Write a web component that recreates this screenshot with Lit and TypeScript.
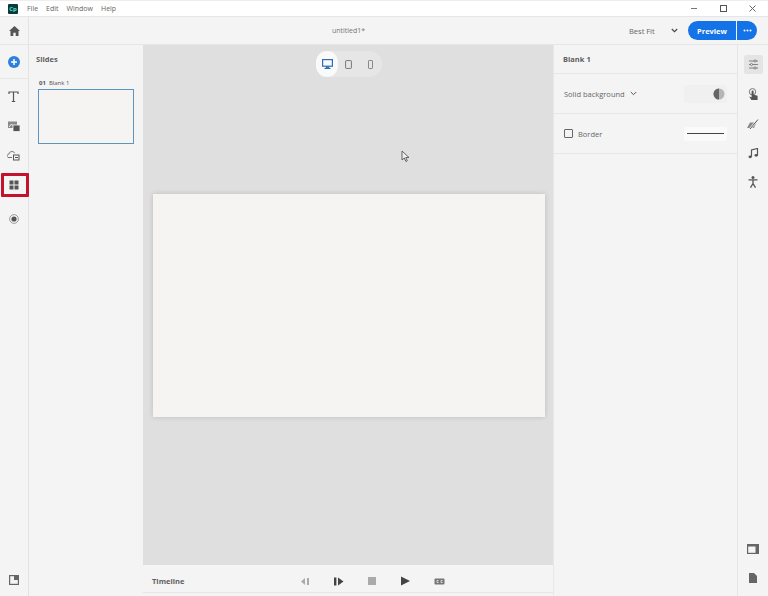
import { LitElement, html, css, svg } from "lit";
import { customElement } from "lit/decorators.js";

const I = (w: number, h: number, body: unknown, cls = "") =>
  html`<svg class=${cls} width=${w} height=${h} viewBox="0 0 ${w} ${h}">${body}</svg>`;

@customElement("app-root")
export class AppRoot extends LitElement {
  static styles = css`
    :host { display: flex; flex-direction: column; width: 768px; height: 596px; overflow: hidden; background: #f4f4f4; font-family: "Open Sans", "Liberation Sans", sans-serif; color: #555; position: relative; }
    svg { display: block; flex: none; }
    .titlebar { height: 15px; flex: none; background: #fff; display: flex; align-items: center; padding: 0 1px 0 8px; font-size: 7px; color: #666; border-bottom: 1px solid #e6e6e6; border-top: 1px solid #eee; box-sizing: content-box; }
    .logo { width: 10px; height: 10px; background: #0b3a3c; color: #4fe0c8; font-size: 6px; font-weight: 700; line-height: 10px; text-align: center; border-radius: 1px; margin-right: 9px; }
    .menu { display: flex; gap: 8px; }
    .winbtns { margin-left: auto; display: flex; gap: 0; align-items: center; }
    .winbtns span { width: 29px; display: flex; justify-content: center; }
    .body { flex: 1; display: flex; min-height: 0; }
    .rail { width: 28px; flex: none; border-right: 1px solid #e3e3e3; display: flex; flex-direction: column; align-items: center; }
    .rail-home { height: 27px; flex: none; width: 100%; display: flex; align-items: center; justify-content: center; border-bottom: 1px solid #e6e6e6; }
    .rail-add { height: 34px; flex: none; width: 100%; box-sizing: border-box; padding-right: 1px; display: flex; align-items: center; justify-content: center; border-bottom: 1px solid #e6e6e6; }
    .rail-tools { display: flex; flex-direction: column; align-items: flex-start; width: 100%; padding-top: 3px; }
    .tool { height: 29.5px; width: 27px; display: flex; align-items: center; justify-content: center; }
    .tool.red { box-sizing: border-box; align-self: flex-start; height: 24px; width: 28px; margin: 2px 0 0 1px; padding: 0 2px 0 0; border: 3px solid #c4112d; border-radius: 1px; }
    .tool.rec { margin-top: 7px; height: 30px; }
    .rail-end { margin-top: auto; padding-bottom: 11px; }
    .work { flex: 1; display: flex; flex-direction: column; min-width: 0; }
    .topbar { height: 27px; flex: none; display: flex; align-items: center; border-bottom: 1px solid #e6e6e6; }
    .docname { font-size: 7px; color: #777; margin-left: 303px; }
    .top-right { margin-left: auto; display: flex; align-items: center; padding-right: 11px; }
    .fit { font-size: 7.5px; color: #666; width: 42px; }
    .chev-wrap { width: 17px; }
    .btn-preview { width: 48px; height: 19px; margin-left: 0; background: #1473e6; color: #fff; font-size: 7.5px; font-weight: 700; display: flex; align-items: center; justify-content: center; border-radius: 10px 0 0 10px; }
    .btn-more { width: 20px; height: 19px; margin-left: 1px; background: #1473e6; color: #fff; display: flex; align-items: center; justify-content: center; border-radius: 0 10px 10px 0; }
    .panes { flex: 1; display: flex; min-height: 0; }
    .slides { width: 114px; flex: none; box-sizing: border-box; padding: 9px 9px 0 7px; }
    .h { font-size: 7.5px; font-weight: 700; color: #5f5f5f; line-height: 11px; }
    .sl-label { margin-top: 14px; margin-left: 3px; font-size: 6px; color: #555; display: flex; gap: 3px; line-height: 9px; }
    .sl-label b { font-weight: 700; }
    .thumb { margin-top: 1px; margin-left: 2px; width: 96px; height: 55px; box-sizing: border-box; border: 1.5px solid #5f94bd; background: #f5f4f2; }
    .center { width: 410px; flex: none; display: flex; flex-direction: column; }
    .canvas { flex: 1; background: #dfdfdf; display: flex; flex-direction: column; align-items: center; padding: 6px 0 0; position: relative; min-height: 0; }
    .devices { display: flex; align-items: center; height: 26px; width: 66px; margin-left: 2px; border-radius: 13px; background: #e6e6e6; }
    .dev { width: 22px; height: 26px; display: flex; align-items: center; justify-content: center; }
    .dev.on { background: #fafafa; border-radius: 13px; margin-right: -1px; }
    .slide { margin-top: 117px; width: 392px; height: 223px; background: #f5f4f2; box-shadow: 0 0 5px rgba(0,0,0,.16); margin-left: 2px; }
    .cursor { position: absolute; left: 258px; top: 105px; }
    .timeline { height: 28px; flex: none; display: flex; align-items: center; background: #f4f4f4; padding: 5px 0 0 9px; margin-bottom: 3px; border-bottom: 1px solid #e6e6e6; box-sizing: border-box; position: relative; }
    .tl-ctrl { margin-left: 104px; display: flex; align-items: center; gap: 0; }
    .tl-ctrl span { width: 33.5px; display: flex; justify-content: center; }
    .props { width: 185px; flex: none; border-right: 1px solid #e6e6e6; border-left: 1px solid #e8e8e8; box-sizing: border-box; }
    .prop-h { height: 29px; box-sizing: border-box; border-bottom: 1.5px solid #e8e8e8; padding: 9px 0 0 9px; }
    .row { height: 40px; box-sizing: border-box; border-bottom: 1.5px solid #e8e8e8; display: flex; align-items: center; padding: 0 0 0 10px; font-size: 7.5px; color: #666; }
    .row .chev { margin-left: 5px; }
    .swatch { margin-left: auto; margin-right: 10px; width: 43px; height: 18px; background: #f0f0f0; display: flex; align-items: center; justify-content: flex-end; padding-right: 2px; box-sizing: border-box; border-radius: 2px; }
    .check { width: 7px; height: 7px; border: 1px solid #666; border-radius: 1px; margin-right: 5px; }
    .stroke { margin-left: auto; margin-right: 10px; width: 43px; height: 14px; background: #fafafa; display: flex; align-items: center; justify-content: center; border-radius: 2px; }
    .stroke i { display: block; width: 37px; height: 1.5px; background: #444; }
    .rrail { flex: 1; display: flex; flex-direction: column; align-items: center; padding-top: 4.5px; }
    .ricon { height: 29px; width: 100%; display: flex; align-items: center; justify-content: center; }
    .ricon.tall { height: 31px; }
    .ricon.on i { display: flex; align-items: center; justify-content: center; width: 19px; height: 19px; background: #e4e4e4; border-radius: 2px; }
    .rend { margin-top: auto; padding-bottom: 4px; }
  `;

  render() {
    const d = "#555";
    return html`
      <div class="titlebar">
        <div class="logo">Cp</div>
        <div class="menu"><span>File</span><span>Edit</span><span>Window</span><span>Help</span></div>
        <div class="winbtns">
          <span>${I(9, 9, svg`<path d="M1 4.5h6" stroke="#777"/>`)}</span>
          <span>${I(9, 9, svg`<rect x="1.5" y="1.5" width="6" height="6" fill="none" stroke="#555"/>`)}</span>
          <span>${I(9, 9, svg`<path d="M1.5 1.5l6 6M7.5 1.5l-6 6" stroke="#666"/>`)}</span>
        </div>
      </div>
      <div class="body">
        <div class="rail">
          <div class="rail-home">${I(11, 10, svg`<path d="M5.5 0L11 5H9.5V10H6.7V6.8H4.3V10H1.5V5H0Z" fill=${d}/>`)}</div>
          <div class="rail-add">${I(12, 12, svg`<circle cx="6" cy="6" r="6" fill="#2f80dc"/><path d="M6 3v6M3 6h6" stroke="#fff" stroke-width="1.5"/>`)}</div>
          <div class="rail-tools">
            <div class="tool">${I(11, 11, svg`<path d="M1 3V1h9v2M5.5 1v9.5M3.8 10.5h3.4" fill="none" stroke=${d} stroke-width="1.2"/>`)}</div>
            <div class="tool">${I(12, 11, svg`<rect x="0" y="0.5" width="9" height="6.5" fill="#8a8a8a"/><path d="M1 6l2.5-3 2 2" stroke="#eee" fill="none"/><rect x="5" y="4" width="7" height="6.5" fill="#555" stroke="#f4f4f4" stroke-width=".8"/>`)}</div>
            <div class="tool">${I(13, 11, svg`<path d="M1 7.5a2 2 0 0 1 1-3.6 3 3 0 0 1 5.7-.7" fill="none" stroke="#777"/><path d="M1 7.5H5" stroke="#777"/><rect x="6.5" y="5" width="5.5" height="5" fill="none" stroke="#555"/><path d="M8 7.5h3" stroke="#555"/>`)}</div>
            <div class="tool red">${I(10, 10, svg`<rect x="0.5" y="0.5" width="4" height="4" fill=${d}/><rect x="5.5" y="0.5" width="4" height="4" fill=${d}/><rect x="0.5" y="5.5" width="4" height="4" fill=${d}/><rect x="5.5" y="5.5" width="4" height="4" fill=${d}/>`)}</div>
            <div class="tool rec">${I(10, 10, svg`<circle cx="5" cy="5" r="4.4" fill="none" stroke="#888" stroke-width=".8"/><circle cx="5" cy="5" r="2.6" fill="#555"/>`)}</div>
          </div>
          <div class="rail-end">${I(10, 10, svg`<rect x="0.6" y="0.6" width="8.8" height="8.8" fill="none" stroke="#666" stroke-width="1.2"/><path d="M5 1h4.5v4H5z" fill="#666"/>`)}</div>
        </div>
        <div class="work">
          <div class="topbar">
            <div class="docname">untitled1*</div>
            <div class="top-right">
              <span class="fit">Best Fit</span>
              <span class="chev-wrap">${I(7, 5, svg`<path d="M.8 1l2.7 2.7L6.2 1" fill="none" stroke="#444" stroke-width="1.1"/>`)}</span>
              <div class="btn-preview">Preview</div>
              <div class="btn-more">${I(9, 3, svg`<circle cx="1.5" cy="1.5" r="1" fill="#fff"/><circle cx="4.5" cy="1.5" r="1" fill="#fff"/><circle cx="7.5" cy="1.5" r="1" fill="#fff"/>`)}</div>
            </div>
          </div>
          <div class="panes">
            <div class="slides">
              <div class="h">Slides</div>
              <div class="sl-label"><b>01</b><span>Blank 1</span></div>
              <div class="thumb"></div>
            </div>
            <div class="center">
              <div class="canvas">
                <div class="devices">
                  <div class="dev on">${I(11, 10, svg`<rect x=".6" y=".6" width="9.8" height="6.6" fill="none" stroke="#2c6fb4" stroke-width="1.2"/><path d="M4 7.5h3l.5 1.7h-4z" fill="#2c6fb4"/><path d="M2.5 9.5h6" stroke="#2c6fb4"/>`)}</div>
                  <div class="dev">${I(7, 9, svg`<rect x=".6" y=".6" width="5.8" height="7.8" rx=".6" fill="none" stroke="#777"/>`)}</div>
                  <div class="dev">${I(5, 9, svg`<rect x=".5" y=".5" width="4" height="8" rx=".6" fill="none" stroke="#888"/>`)}</div>
                </div>
                <div class="slide"></div>
                <div class="cursor">${I(9, 13, svg`<path d="M1 1v9l2.3-2 1.6 3.5 1.4-.7L4.8 7.5H8z" fill="#eee" stroke="#555" stroke-width=".9"/>`)}</div>
              </div>
              <div class="timeline">
                <div class="h">Timeline</div>
                <div class="tl-ctrl">
                  <span>${I(10, 9, svg`<path d="M5 1v7L1 4.5z" fill="#aaa"/><rect x="7" y="1" width="2" height="7" fill="#aaa"/>`)}</span>
                  <span>${I(10, 9, svg`<rect x="0" y="0.5" width="2.4" height="8" fill="#444"/><path d="M4 .5v8l5.5-4z" fill="#444"/>`)}</span>
                  <span>${I(8, 8, svg`<rect width="8" height="8" fill="#aaa"/>`)}</span>
                  <span>${I(9, 10, svg`<path d="M0 .5v9L9 5z" fill="#444"/>`)}</span>
                  <span>${I(11, 7, svg`<rect x=".5" y=".5" width="10" height="6" rx="1" fill="#777"/><path d="M4.5 2.5H3v2h1.5M8.5 2.5H7v2h1.5" fill="none" stroke="#eee" stroke-width=".8"/>`)}</span>
                </div>
              </div>
            </div>
            <div class="props">
              <div class="prop-h h">Blank 1</div>
              <div class="row">Solid background
                <span class="chev">${I(7, 5, svg`<path d="M.8 1l2.7 2.7L6.2 1" fill="none" stroke="#555" stroke-width="1"/>`)}</span>
                <div class="swatch">${I(12, 12, svg`<circle cx="6" cy="6" r="5.5" fill="#b5b5b5"/><path d="M6 .5a5.5 5.5 0 0 0 0 11z" fill="#666"/>`)}</div>
              </div>
              <div class="row"><div class="check"></div>Border<div class="stroke"><i></i></div></div>
            </div>
            <div class="rrail">
              <div class="ricon on"><i>${I(11, 11, svg`<path d="M1 2h9M1 5.5h9M1 9h9" stroke="#777" stroke-width=".9"/><circle cx="7" cy="2" r="1.1" fill="#e4e4e4" stroke="#666" stroke-width=".7"/><circle cx="3.5" cy="5.5" r="1.1" fill="#e4e4e4" stroke="#666" stroke-width=".7"/><circle cx="7" cy="9" r="1.1" fill="#e4e4e4" stroke="#666" stroke-width=".7"/>`)}</i></div>
              <div class="ricon tall">${I(11, 13, svg`<circle cx="4.5" cy="3.8" r="3.2" fill="none" stroke="#777"/><path d="M3.6 3.5a1 1 0 0 1 2 0v3.2l4 1.1v4.2H3.4L1.2 8.6l2.4.6z" fill="#555"/>`)}</div>
              <div class="ricon">${I(12, 10, svg`<path d="M0 9L3 3.5h6.5L7 9z" fill="#888"/><path d="M3 10L11 .5" stroke="#f4f4f4" stroke-width="2.2"/><path d="M3 10L11 .5" stroke="#555" stroke-width="1"/>`)}</div>
              <div class="ricon">${I(11, 11, svg`<path d="M3.5 8.5V2l6-1.5v6.5" fill="none" stroke="#555" stroke-width="1.2"/><ellipse cx="2.2" cy="8.8" rx="1.7" ry="1.4" fill="#555"/><ellipse cx="8.2" cy="7.3" rx="1.7" ry="1.4" fill="#555"/>`)}</div>
              <div class="ricon">${I(10, 12, svg`<circle cx="5" cy="1.6" r="1.5" fill="#555"/><path d="M.5 3.8h9M5 3.8v4M5 7.5l-2.5 4.2M5 7.5l2.5 4.2" fill="none" stroke="#555" stroke-width="1.3"/>`)}</div>
              <div class="rend">
                <div class="ricon">${I(12, 10, svg`<rect x=".6" y=".6" width="10.8" height="8.8" fill="none" stroke="#666" stroke-width="1.2"/><path d="M1 1h10v1.5H1zM8.5 1H11v8H8.5z" fill="#666"/>`)}</div>
                <div class="ricon">${I(8, 10, svg`<path d="M0 0h5l3 3v7H0z" fill="#666"/>`)}</div>
              </div>
            </div>
          </div>
        </div>
      </div>
    `;
  }
}
